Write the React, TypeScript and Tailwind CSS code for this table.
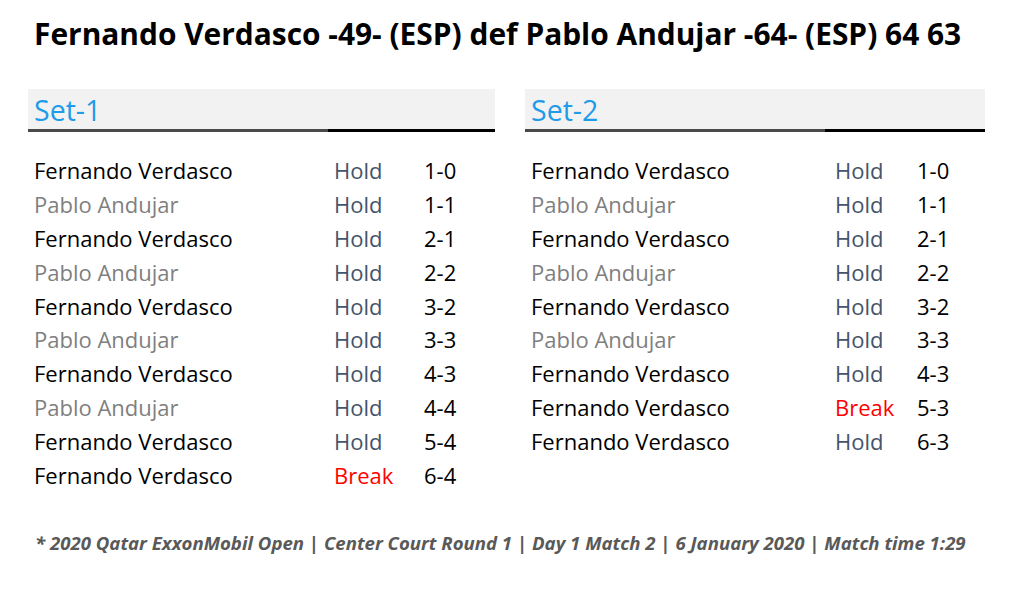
import React from 'react';

type Game = { server: string; result: 'Hold' | 'Break'; score: string };

const FV = 'Fernando Verdasco';
const PA = 'Pablo Andujar';

const set1: Game[] = [
  { server: FV, result: 'Hold', score: '1-0' },
  { server: PA, result: 'Hold', score: '1-1' },
  { server: FV, result: 'Hold', score: '2-1' },
  { server: PA, result: 'Hold', score: '2-2' },
  { server: FV, result: 'Hold', score: '3-2' },
  { server: PA, result: 'Hold', score: '3-3' },
  { server: FV, result: 'Hold', score: '4-3' },
  { server: PA, result: 'Hold', score: '4-4' },
  { server: FV, result: 'Hold', score: '5-4' },
  { server: FV, result: 'Break', score: '6-4' },
];

const set2: Game[] = [
  { server: FV, result: 'Hold', score: '1-0' },
  { server: PA, result: 'Hold', score: '1-1' },
  { server: FV, result: 'Hold', score: '2-1' },
  { server: PA, result: 'Hold', score: '2-2' },
  { server: FV, result: 'Hold', score: '3-2' },
  { server: PA, result: 'Hold', score: '3-3' },
  { server: FV, result: 'Hold', score: '4-3' },
  { server: FV, result: 'Break', score: '5-3' },
  { server: FV, result: 'Hold', score: '6-3' },
];

const SetBlock = ({ title, games, nameW, resW }: { title: string; games: Game[]; nameW: string; resW: string }) => {
  return (
    <div className="flex flex-col">
      <div className="h-[40px] bg-[#f2f2f2] flex items-end px-[6px] pb-[1px]">
        <span className="text-[28.5px] leading-[36px] text-[#1e9be9]">{title}</span>
      </div>
      <div className="flex h-[3px]">
        <div className="w-[300px] bg-[#4a4a4a]" />
        <div className="flex-1 bg-black" />
      </div>
      <div className="flex flex-col pt-[22px] pl-[6px]">
        {games.map((g, i) => (
          <div key={i} className="flex h-[33.8px] items-center text-[22px]">
            <span className={`${nameW} ${g.server === PA ? 'text-[#7f7f7f]' : 'text-black'}`}>{g.server}</span>
            <span className={`${resW} ${g.result === 'Break' ? 'text-[#ff0000]' : 'text-[#44546a]'}`}>{g.result}</span>
            <span className="text-black">{g.score}</span>
          </div>
        ))}
      </div>
    </div>
  );
};

const App = () => {
  return (
    <div className="w-[1024px] h-[591px] bg-white overflow-hidden" style={{ fontFamily: '"Open Sans", Lato, sans-serif' }}>
      <h1 className="pl-[34px] pt-[14px] text-[29.9px] leading-[40px] font-bold text-black">
        Fernando Verdasco -49- (ESP) def Pablo Andujar -64- (ESP) 64 63
      </h1>
      <div className="flex gap-[30px] pl-[28px] mt-[35px] h-[404px]">
        <div className="w-[467px]">
          <SetBlock title="Set-1" games={set1} nameW="w-[300px]" resW="w-[90px]" />
        </div>
        <div className="w-[460px]">
          <SetBlock title="Set-2" games={set2} nameW="w-[304px]" resW="w-[82px]" />
        </div>
      </div>
      <p className="pl-[35px] mt-[38px] text-[18.6px] leading-[24px] font-bold italic text-[#595959]">
        * 2020 Qatar ExxonMobil Open | Center Court Round 1 | Day 1 Match 2 | 6 January 2020 | Match time 1:29
      </p>
    </div>
  );
};

export default App;
